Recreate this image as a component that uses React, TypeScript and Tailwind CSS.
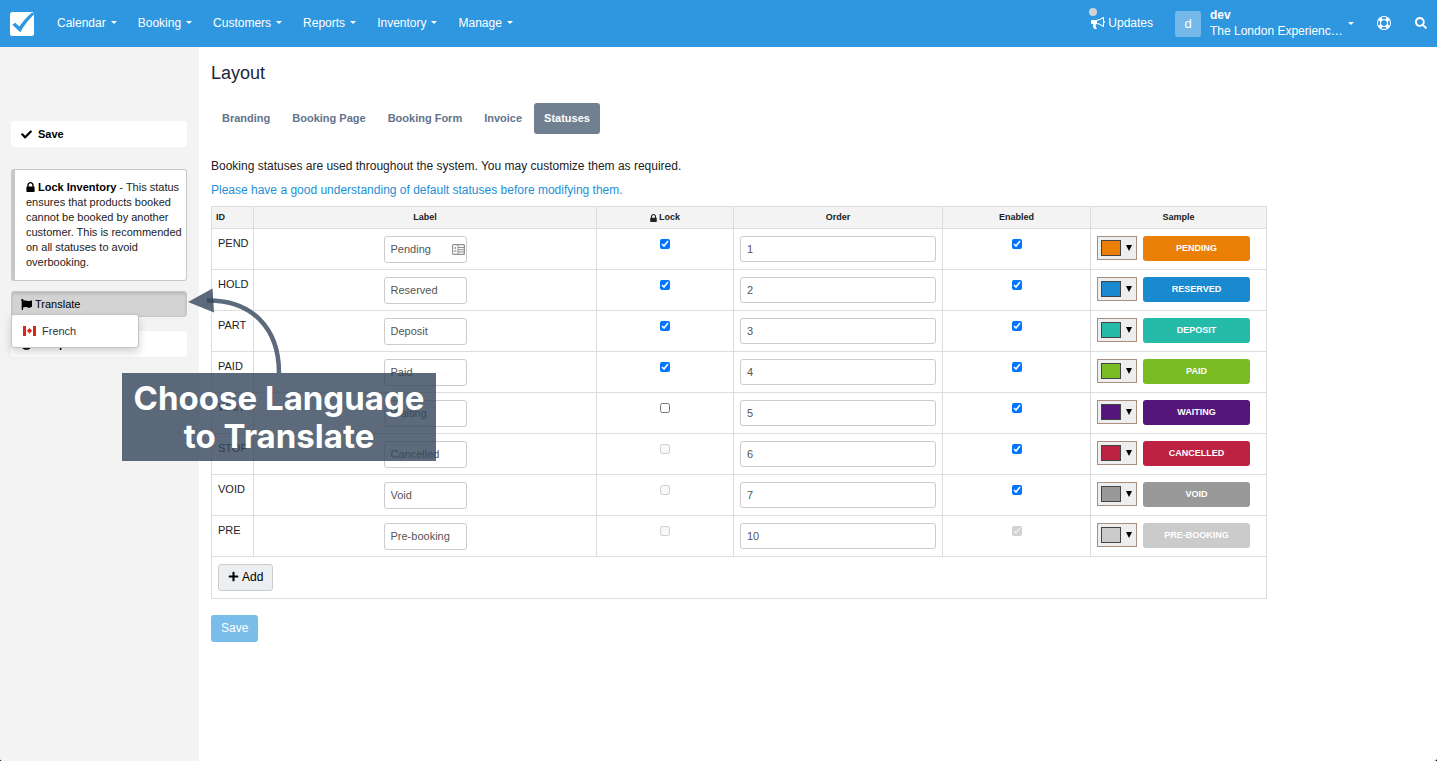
import { useState } from "react";
import {
  FaCheck,
  FaFlag,
  FaPlus,
  FaQuestionCircle,
  FaSearch,
} from "react-icons/fa";

const menuItems = [
  "Calendar",
  "Booking",
  "Customers",
  "Reports",
  "Inventory",
  "Manage",
];

const tabs = ["Branding", "Booking Page", "Booking Form", "Invoice", "Statuses"];

const statusList = [
  { id: "PEND", label: "Pending", lock: true, order: 1, enabled: true, color: "bg-[#ea8008]" },
  { id: "HOLD", label: "Reserved", lock: true, order: 2, enabled: true, color: "bg-[#1a8ad0]" },
  { id: "PART", label: "Deposit", lock: true, order: 3, enabled: true, color: "bg-[#24bba9]" },
  { id: "PAID", label: "Paid", lock: true, order: 4, enabled: true, color: "bg-[#78bb22]" },
  { id: "WAIT", label: "Waiting", lock: false, order: 5, enabled: true, color: "bg-[#55167b]" },
  { id: "STOP", label: "Cancelled", lock: false, lockDisabled: true, order: 6, enabled: true, color: "bg-[#bd2243]" },
  { id: "VOID", label: "Void", lock: false, lockDisabled: true, order: 7, enabled: true, color: "bg-[#999999]" },
  { id: "PRE", label: "Pre-booking", lock: false, lockDisabled: true, order: 10, enabled: true, enabledDisabled: true, color: "bg-[#cbcbcb]" },
];

const Caret = () => (
  <span className="border-x-[3px] border-t-[3px] border-x-transparent border-t-white" />
);

const BullhornIcon = () => (
  <svg viewBox="0 0 1792 1792" className="size-[14px] fill-white">
    <path d="M1664 640q53 0 90.5 37.5t37.5 90.5-37.5 90.5-90.5 37.5v384q0 52-38 90t-90 38q-417-347-812-380-58 19-91 66t-31 100.5 40 92.5q-20 33-23 65.5t6 58 33.5 55 48 50 61.5 50.5q-29 58-111.5 83t-168.5 11.5-132-55.5q-7-23-29.5-87.5t-32-94.5-23-89-15-101 3.5-98.5 22-110.5h-122q-66 0-113-47t-47-113v-192q0-66 47-113t113-47h480q435 0 896-384 52 0 90 38t38 90v384zm-128 604v-954q-394 302-768 343v270q377 42 768 341z" />
  </svg>
);

const LifeRingIcon = () => (
  <svg viewBox="0 0 1792 1792" className="size-[14px] fill-white">
    <path d="M896 0q182 0 348 71t286 191 191 286 71 348-71 348-191 286-286 191-348 71-348-71-286-191-191-286-71-348 71-348 191-286 286-191 348-71zm0 128q-190 0-361 90l194 194q82-28 167-28t167 28l194-194q-171-90-361-90zm-678 1129l194-194q-28-82-28-167t28-167l-194-194q-90 171-90 361t90 361zm678 407q190 0 361-90l-194-194q-82 28-167 28t-167-28l-194 194q171 90 361 90zm0-384q159 0 271.500-112.500t112.500-271.500-112.500-271.500-271.500-112.500-271.500 112.500-112.500 271.500 112.500 271.500 271.500 112.500zm484-217l194 194q90-171 90-361t-90-361l-194 194q28 82 28 167t-28 167z" />
  </svg>
);

const LockIcon = ({ className }: any) => (
  <svg viewBox="320 128 1152 1408" className={className} fill="currentColor">
    <path d="M640 768h512v-192q0-106-75-181t-181-75-181 75-75 181v192zm832 96v576q0 40-28 68t-68 28h-960q-40 0-68-28t-28-68v-576q0-40 28-68t68-28h32v-192q0-184 132-316t316-132 316 132 132 316v192h32q40 0 68 28t28 68z" />
  </svg>
);

const ContactCardIcon = ({ className }: any) => (
  <svg viewBox="0 0 13 11" className={className} fill="none" stroke="#909090">
    <rect x="0.6" y="0.6" width="11.800" height="9.800" rx="1" strokeWidth="1.200" />
    <path d="M6 1V10M6 3.500H12M6 5.700H12M6 7.900H12" strokeWidth="1" />
    <circle cx="3.300" cy="4" r="0.900" fill="#909090" stroke="none" />
    <path d="M1.800 7.500C2 5.800 4.600 5.800 4.800 7.500Z" fill="#909090" stroke="none" />
  </svg>
);

const LogoIcon = () => (
  <svg viewBox="0 0 24 24" className="size-6">
    <rect width="24" height="24" rx="2.5" fill="#fff" />
    <path d="M2.300 12.700 5.300 10.800 9.300 14.400C13 9.400 17.200 4.600 21.800 0.800L24 1.200V2.600C18.800 7.400 14.400 13.200 10.300 20.200Z" fill="#2f97e0" />
  </svg>
);

const CanadaFlag = () => (
  <svg viewBox="0 0 13 10" className="h-[10px] w-[13px]">
    <rect width="13" height="10" fill="#fff" />
    <rect width="3" height="10" fill="#e0241b" />
    <rect x="10" width="3" height="10" fill="#e0241b" />
    <path d="M6.500 1.800 7.300 3.200 8.200 3 8.100 4.200 9.300 4.600 7.700 6.400 6.800 6.500V7.900H6.200V6.500L5.300 6.400 3.700 4.600 4.900 4.200 4.800 3 5.700 3.200Z" fill="#e0241b" />
  </svg>
);

function Header() {
  return (
    <header className="flex h-[47px] items-center bg-[#2f97e0] px-[10px] text-xs text-white">
      <a href="#" aria-label="Home">
        <LogoIcon />
      </a>
      <nav className="ml-[23px] flex gap-[21px] pb-[2px]">
        {menuItems.map((item) => (
          <a key={item} href="#" className="flex items-center gap-[5px]">
            {item}
            <Caret />
          </a>
        ))}
      </nav>
      <div className="ml-auto flex items-center">
        <a href="#" className="relative flex items-center gap-[3px] pb-[2px]">
          <BullhornIcon />
          Updates
          <span className="absolute -top-[7px] -left-[2px] size-2 rounded-full bg-[#cfd3d8]" />
        </a>
        <button type="button" className="ml-[22px] flex items-center text-left">
          <span className="flex size-[26px] items-center justify-center rounded-[3px] bg-[#74b9ea] text-[13px]">
            d
          </span>
          <span className="ml-[9px] block w-[128px] pb-[2px] leading-4">
            <b className="block">dev</b>
            <span className="block whitespace-nowrap">The London Experienc…</span>
          </span>
          <span className="ml-[10px] flex">
            <Caret />
          </span>
        </button>
        <a href="#" aria-label="Support" className="ml-[23px] pb-[2px]">
          <LifeRingIcon />
        </a>
        <button type="button" aria-label="Search" className="ml-6 pb-[2px]">
          <FaSearch className="size-3" />
        </button>
      </div>
    </header>
  );
}

function Sidebar() {
  return (
    <aside className="w-[199px] shrink-0 bg-[#f3f3f3] px-[11px] pt-[74px] text-[11px] text-black">
      <button type="button" className="flex h-[26px] w-[176px] items-center gap-[6px] rounded-[3px] bg-white px-[10px] font-bold">
        <FaCheck className="size-[11px]" />
        Save
      </button>
      <div className="mt-[22px] w-[176px] rounded-[3px] border border-l-4 border-[#c8c8c8] bg-white py-[10px] pr-1 pl-[11px] leading-[15px] text-[#222]">
        <LockIcon className="mb-[3px] inline h-[10px] w-[9px] text-black" />{" "}
        <b className="text-black">Lock Inventory</b> - This status ensures that
        products booked cannot be booked by another customer. This is
        recommended on all statuses to avoid overbooking.
      </div>
      <div className="relative mt-[10px] w-[176px]">
        <button type="button" className="flex h-[26px] w-full items-center gap-[3px] rounded-[3px] border border-[#c6c6c6] bg-[#d3d3d3] px-[9px] shadow-[inset_0_2px_3px_rgba(0,0,0,0.12)]">
          <FaFlag className="size-[11px]" />
          Translate
        </button>
        <div className="absolute top-[23px] left-0 z-10 w-[128px] rounded-[3px] border border-[#c4c4c4] bg-white px-[11px] py-2 shadow-[0_4px_8px_rgba(0,0,0,0.18)]">
          <a href="#" className="flex h-4 items-center gap-[6px] text-[#333]">
            <CanadaFlag />
            French
          </a>
        </div>
      </div>
      <button type="button" className="mt-[14px] flex h-[26px] w-[176px] items-center gap-[10px] rounded-[3px] bg-white px-[10px] font-bold">
        <FaQuestionCircle className="size-[11px]" />
        Help
      </button>
    </aside>
  );
}

function StatusRow({ data }: any) {
  return (
    <tr className="align-top [&>td]:border [&>td]:border-[#ddd] [&>td]:px-[6px] [&>td]:pt-[7px] [&>td]:pb-[6px]">
      <td className="leading-[14px] text-[#222]">{data.id}</td>
      <td>
        <div className="relative mx-auto w-[83px]">
          <input
            type="text"
            aria-label={`${data.id} label`}
            defaultValue={data.label}
            className="block h-[27px] w-full rounded-[3px] border border-[#ccc] bg-white px-[6px] pb-[2px] text-[#555]"
          />
          {data.id === "PEND" && (
            <ContactCardIcon className="absolute top-[8px] right-[2px] h-[11px] w-[13px]" />
          )}
        </div>
      </td>
      <td>
        <input
          type="checkbox"
          aria-label={`${data.id} lock`}
          defaultChecked={data.lock}
          disabled={data.lockDisabled}
          className="mx-auto mt-[3px] block size-[10px]"
        />
      </td>
      <td>
        <input
          type="text"
          aria-label={`${data.id} order`}
          defaultValue={data.order}
          className="block h-[26px] w-full rounded-[3px] border border-[#ccc] bg-white px-[6px] text-[#555]"
        />
      </td>
      <td>
        <input
          type="checkbox"
          aria-label={`${data.id} enabled`}
          defaultChecked={data.enabled}
          disabled={data.enabledDisabled}
          className="mx-auto mt-[3px] block size-[10px]"
        />
      </td>
      <td>
        <div className="flex gap-[6px]">
          <button
            type="button"
            aria-label={`${data.id} color`}
            className="flex h-6 w-10 items-center justify-between border border-[#a98f7c] bg-[#eee] pr-[4px] pl-[3px]"
          >
            <span className={`h-4 w-5 border border-[#444] ${data.color}`} />
            <span className="border-x-[3px] border-t-[6px] border-x-transparent border-t-black" />
          </button>
          <button
            type="button"
            className={`h-[25px] w-[107px] rounded-[3px] text-[9px] font-bold text-white uppercase ${data.color}`}
          >
            {data.label}
          </button>
        </div>
      </td>
    </tr>
  );
}

function StatusTable() {
  return (
    <table className="mt-2 w-full max-w-[1056px] table-fixed border-collapse text-[11px]">
      <colgroup>
        <col className="w-[42px]" />
        <col />
        <col className="w-[137px]" />
        <col className="w-[209px]" />
        <col className="w-[148px]" />
        <col className="w-[176px]" />
      </colgroup>
      <thead>
        <tr className="h-[22px] bg-[#f3f3f3] text-[9px] text-[#222] [&>th]:border [&>th]:border-[#ddd]">
          <th className="pl-1 text-left">ID</th>
          <th>Label</th>
          <th>
            <span className="flex items-center justify-center gap-[2px]">
              <LockIcon className="h-2 w-[7px]" />
              Lock
            </span>
          </th>
          <th>Order</th>
          <th>Enabled</th>
          <th>Sample</th>
        </tr>
      </thead>
      <tbody>
        {statusList.map((status) => (
          <StatusRow key={status.id} data={status} />
        ))}
      </tbody>
      <tfoot>
        <tr>
          <td colSpan={6} className="border border-[#ddd] px-[6px] py-[7px]">
            <button
              type="button"
              className="flex h-[27px] items-center gap-[3px] rounded-[3px] border border-[#ccc] bg-[#eceff1] px-[9px] pb-[2px] text-xs text-black"
            >
              <FaPlus className="size-[11px]" />
              Add
            </button>
          </td>
        </tr>
      </tfoot>
    </table>
  );
}

// Callout pointing at the translate menu
function Callout() {
  return (
    <div className="absolute top-[288px] left-[122px] z-20 w-[314px]">
      <svg viewBox="0 0 314 85" className="block h-[85px] w-full">
        <path d="M85 12.500C130 12 157 40 157 85" fill="none" stroke="#34455a" strokeOpacity="0.8" strokeWidth="4.500" />
        <path d="M66 14 90.500 0.500 92 24.500Z" fill="#34455a" fillOpacity="0.8" />
      </svg>
      <p className="bg-[#34455a]/80 pt-[6px] pb-[6px] text-center font-['Inter',sans-serif] text-[33px] leading-[38px] font-bold whitespace-nowrap text-white">
        Choose Language
        <br />
        to Translate
      </p>
    </div>
  );
}

export default function App() {
  const [activeTab, setActiveTab] = useState("Statuses");

  return (
    <div className="bg-black">
      <div className="relative flex min-h-screen flex-col overflow-hidden rounded-b-[3px] bg-white font-['Liberation_Sans',Arial,sans-serif]">
        <Header />
        <div className="flex flex-1">
          <Sidebar />
          <main className="min-w-0 flex-1 pt-[14px] pr-[10px] pl-3">
            <h1 className="text-lg leading-6 text-[#1c2740]">Layout</h1>
            <div className="mt-[18px] flex gap-[2px] pl-px">
              {tabs.map((tab) => (
                <button
                  key={tab}
                  type="button"
                  onClick={() => setActiveTab(tab)}
                  className={
                    tab === activeTab
                      ? "h-[31px] rounded-[3px] bg-[#708090] px-[10px] text-[11px] font-bold text-white"
                      : "h-[31px] rounded-[3px] px-[10px] text-[11px] font-bold text-[#64748b]"
                  }
                >
                  {tab}
                </button>
              ))}
            </div>
            <p className="mt-6 text-[12px] leading-4 text-[#222]">
              Booking statuses are used throughout the system. You may customize
              them as required.
            </p>
            <p className="mt-2 text-[12px] leading-4">
              <a href="#" className="text-[#1d8fd6]">
                Please have a good understanding of default statuses before
                modifying them.
              </a>
            </p>
            <StatusTable />
            <button
              type="button"
              className="mt-4 h-[27px] rounded-[3px] bg-[#7abdea] px-[10px] pb-[2px] text-xs text-white"
            >
              Save
            </button>
          </main>
        </div>
        <Callout />
      </div>
    </div>
  );
}
